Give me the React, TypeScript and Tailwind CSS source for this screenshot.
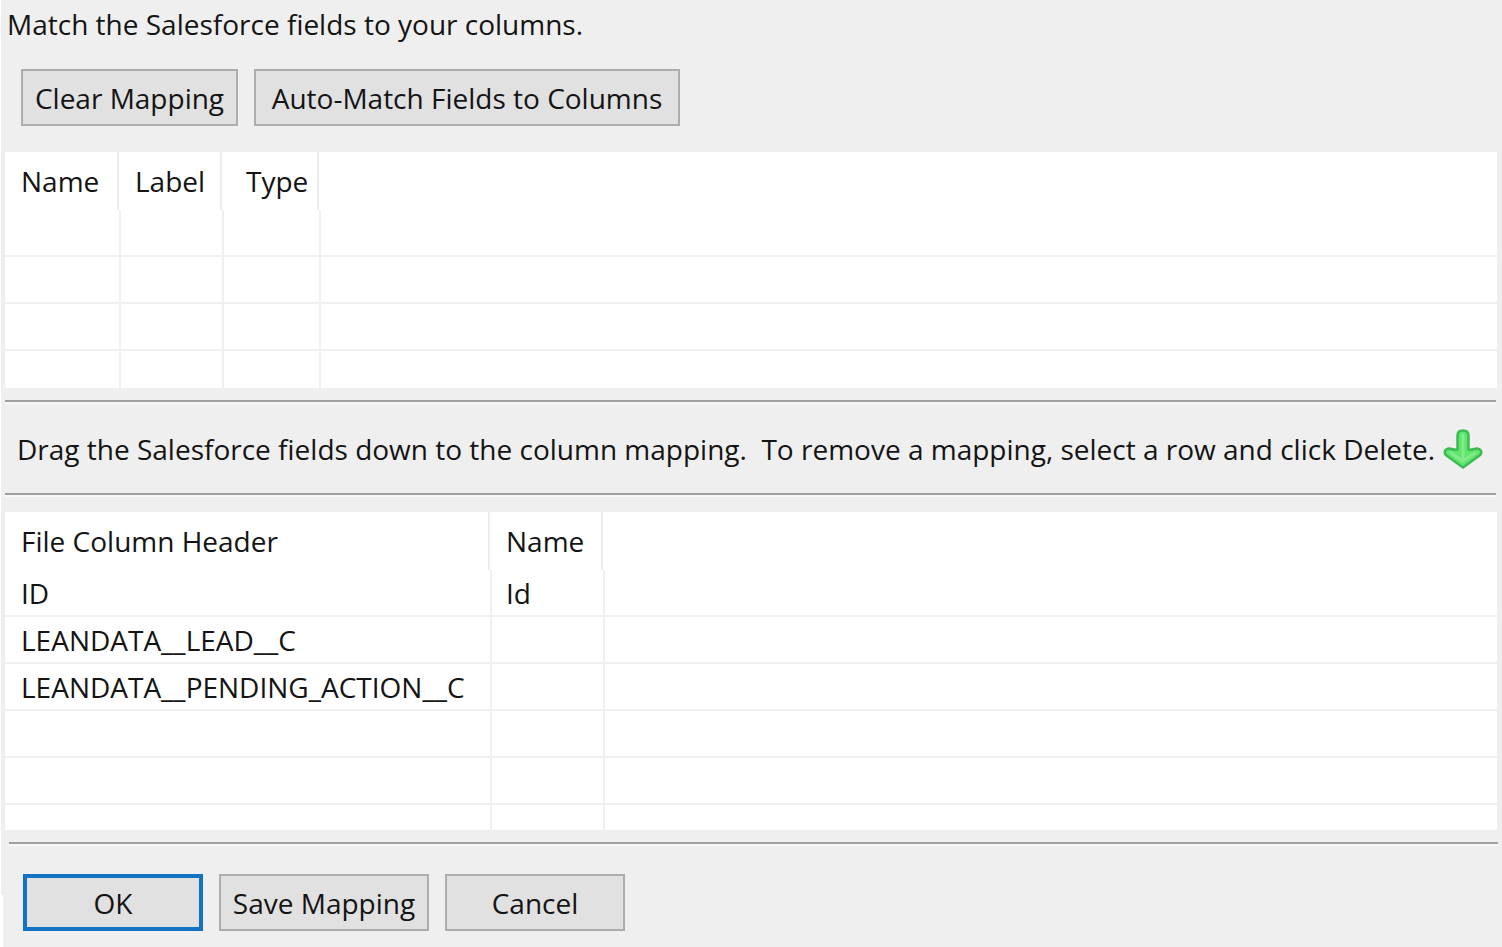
import type { ReactNode } from "react";

const fieldRows = ["h-[47px]", "h-[47px]", "h-[47px]", "h-[37px]"];

const mappingRows = [
  { header: "ID", name: "Id", height: "h-[47px]" },
  { header: "LEANDATA__LEAD__C", name: "", height: "h-[47px]" },
  { header: "LEANDATA__PENDING_ACTION__C", name: "", height: "h-[47px]" },
  { header: "", name: "", height: "h-[47px]" },
  { header: "", name: "", height: "h-[47px]" },
  { header: "", name: "", height: "h-[25px]" },
];

const headCell = "border-r-2 border-[#ececec] p-0 pl-4 text-left font-normal";
const firstCell = "border-b-2 border-b-[#f0f0f2] p-0 pl-4 group-last:border-b-0";
const bodyCell = "border-b-2 border-l-2 border-b-[#f0f0f2] border-l-[#f0f0f4] p-0 pl-3.5 group-last:border-b-0";

function DialogButton({ children, className }: { children: ReactNode; className: string }) {
  return (
    <button type="button" className={`flex h-[57px] items-center justify-center whitespace-nowrap bg-[#e1e1e1] ${className}`}>
      {children}
    </button>
  );
}

function Divider() {
  return <hr className="h-[4px] border-0 border-t-2 border-[#a0a0a0] bg-[#f8f8f8]" />;
}

export default function App() {
  return (
    <main className="flex min-h-screen flex-col border-l border-white bg-[#efefef] font-['Open_Sans','Noto_Sans',sans-serif] text-[28px] leading-[36px] text-[#141414]">
      <p className="pt-1.5 pl-1.5">Match the Salesforce fields to your columns.</p>

      <div className="flex gap-4 pt-[27px] pl-5">
        <DialogButton className="w-[217px] border-2 border-[#adadad]">Clear Mapping</DialogButton>
        <DialogButton className="w-[426px] border-2 border-[#adadad]">Auto-Match Fields to Columns</DialogButton>
      </div>

      <div className="pt-[26px] pr-[5px] pl-1">
        <table className="w-full table-fixed border-separate border-spacing-0 bg-white" aria-label="Salesforce fields">
          <colgroup>
            <col className="w-[114px]" />
            <col className="w-[103px]" />
            <col className="w-[97px]" />
            <col />
          </colgroup>
          <thead>
            <tr className="h-[58px]">
              <th className={headCell}>Name</th>
              <th className={headCell}>Label</th>
              <th className="border-r-2 border-[#ececec] p-0 pl-6 text-left font-normal">Type</th>
              <td className="p-0" />
            </tr>
          </thead>
          <tbody>
            {fieldRows.map((height, i) => (
              <tr key={i} className={`group ${height}`}>
                <td className={firstCell} />
                <td className={bodyCell} />
                <td className={bodyCell} />
                <td className={bodyCell} />
              </tr>
            ))}
          </tbody>
        </table>
      </div>

      <div className="pt-3 pr-1.5 pl-1">
        <Divider />
        <div className="flex h-[89px] items-center gap-2 pl-3">
          <p className="whitespace-pre">Drag the Salesforce fields down to the column mapping.  To remove a mapping, select a row and click Delete.</p>
          <svg viewBox="0 0 40 40" className="size-10 shrink-0" aria-hidden="true">
            <path
              d="M14.5 6.5Q14.5 1.5 20 1.5T25.5 6.5V20.5C29 21.5 30.5 19.5 34 19.5C38.5 20 39.5 24 36.5 26.5L20 38.5L3.5 26.5C.5 24 1.5 20 6 19.5C9.5 19.5 11 21.5 14.5 20.5Z"
              fill="#5fe66f"
              stroke="#3cbb52"
              strokeWidth="2.5"
              strokeLinejoin="round"
            />
            <path d="M20 6V30M8 24L20 32L32 24" fill="none" stroke="#86ea88" strokeWidth="3" strokeLinecap="round" strokeLinejoin="round" />
          </svg>
        </div>
        <Divider />
      </div>

      <div className="pt-[15px] pr-[5px] pl-1">
        <table className="w-full table-fixed border-separate border-spacing-0 bg-white" aria-label="Column mapping">
          <colgroup>
            <col className="w-[485px]" />
            <col className="w-[113px]" />
            <col />
          </colgroup>
          <thead>
            <tr className="h-[58px]">
              <th className={headCell}>File Column Header</th>
              <th className={headCell}>Name</th>
              <td className="p-0" />
            </tr>
          </thead>
          <tbody>
            {mappingRows.map((row, i) => (
              <tr key={i} className={`group ${row.height}`}>
                <td className={firstCell}>{row.header}</td>
                <td className={bodyCell}>{row.name}</td>
                <td className={bodyCell} />
              </tr>
            ))}
          </tbody>
        </table>
      </div>

      <div className="pt-3 pr-1 pl-2">
        <Divider />
      </div>

      <div className="flex grow gap-4 bg-[linear-gradient(#fff,#fff)] bg-[length:2px_52px] bg-left-bottom bg-no-repeat pt-7 pb-4 pl-[22px]">
        <DialogButton className="w-[180px] border-4 border-[#1273c4]">OK</DialogButton>
        <DialogButton className="w-[210px] border-2 border-[#adadad]">Save Mapping</DialogButton>
        <DialogButton className="w-[180px] border-2 border-[#adadad]">Cancel</DialogButton>
      </div>
    </main>
  );
}
